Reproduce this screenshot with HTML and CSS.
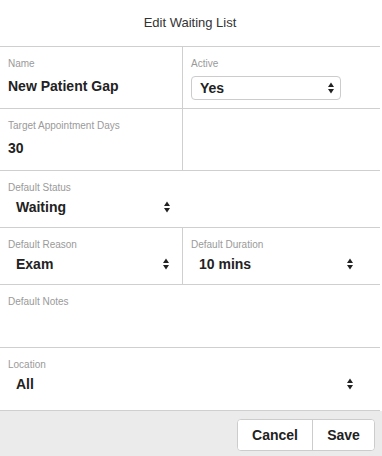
FILE: index.html
```html
<!DOCTYPE html>
<html>
<head>
<meta charset="utf-8">
<link rel="stylesheet" href="styles.css">
</head>
<body>
<div class="modal">
  <div class="header">Edit Waiting List</div>
  <div class="form">
    <div class="row">
      <div class="cell divided">
        <div class="label">Name</div>
        <div class="value">New Patient Gap</div>
      </div>
      <div class="cell">
        <div class="label">Active</div>
        <div class="select boxed">
          <span>Yes</span>
          <svg class="arrows" width="6" height="12" viewBox="0 0 6 12"><path d="M0 5 L3 0.5 L6 5 Z M0 7 L6 7 L3 11.5 Z" fill="#222"/></svg>
        </div>
      </div>
    </div>
    <div class="row">
      <div class="cell divided">
        <div class="label">Target Appointment Days</div>
        <div class="value">30</div>
      </div>
      <div class="cell"></div>
    </div>
    <div class="row short">
      <div class="cell">
        <div class="label">Default Status</div>
        <div class="select plain narrow">
          <span>Waiting</span>
          <svg class="arrows" width="6" height="12" viewBox="0 0 6 12"><path d="M0 5 L3 0.5 L6 5 Z M0 7 L6 7 L3 11.5 Z" fill="#222"/></svg>
        </div>
      </div>
      <div class="cell"></div>
    </div>
    <div class="row short">
      <div class="cell divided">
        <div class="label">Default Reason</div>
        <div class="select plain narrow">
          <span>Exam</span>
          <svg class="arrows" width="6" height="12" viewBox="0 0 6 12"><path d="M0 5 L3 0.5 L6 5 Z M0 7 L6 7 L3 11.5 Z" fill="#222"/></svg>
        </div>
      </div>
      <div class="cell">
        <div class="label">Default Duration</div>
        <div class="select plain">
          <span>10 mins</span>
          <svg class="arrows" width="6" height="12" viewBox="0 0 6 12"><path d="M0 5 L3 0.5 L6 5 Z M0 7 L6 7 L3 11.5 Z" fill="#222"/></svg>
        </div>
      </div>
    </div>
    <div class="row single tall">
      <div class="cell">
        <div class="label">Default Notes</div>
        <div class="textarea"></div>
      </div>
    </div>
    <div class="row single tall">
      <div class="cell">
        <div class="label">Location</div>
        <div class="select plain">
          <span>All</span>
          <svg class="arrows" width="6" height="12" viewBox="0 0 6 12"><path d="M0 5 L3 0.5 L6 5 Z M0 7 L6 7 L3 11.5 Z" fill="#222"/></svg>
        </div>
      </div>
    </div>
  </div>
  <div class="footer">
    <div class="btn-group">
      <button class="btn cancel">Cancel</button>
      <button class="btn save">Save</button>
    </div>
  </div>
</div>
</body>
</html>
```
FILE: styles.css
```css
* { box-sizing: border-box; }
html, body {
  margin: 0;
  padding: 0;
  background: #ffffff;
}
body {
  font-family: "Liberation Sans", Arial, sans-serif;
  color: #222;
}
.modal {
  width: 382px;
  height: 456px;
  display: flex;
  flex-direction: column;
}
.header {
  flex-shrink: 0;
  width: 380px;
  height: 47px;
  border-bottom: 1px solid #cfcfcf;
  display: flex;
  align-items: center;
  justify-content: center;
  font-size: 13px;
  color: #333;
  padding-bottom: 2px;
}
.form {
  flex-shrink: 0;
  width: 380px;
}
.row {
  display: grid;
  grid-template-columns: 183px 1fr;
  border-bottom: 1px solid #cfcfcf;
  height: 62px;
}
.row.short {
  height: 57px;
}
.row.tall {
  height: 63px;
}
.row.single {
  grid-template-columns: 1fr;
}
.cell {
  padding: 11px 8px 0 8px;
}
.cell.divided {
  border-right: 1px solid #cfcfcf;
}
.label {
  font-size: 10px;
  line-height: 12px;
  color: #9a9a9a;
}
.value {
  margin-top: 7px;
  font-size: 14px;
  line-height: 18px;
  font-weight: 700;
  color: #222;
}
.select {
  height: 24px;
  display: flex;
  align-items: center;
  justify-content: space-between;
  font-size: 14px;
  font-weight: 700;
  color: #222;
}
.select.boxed {
  margin-top: 6px;
  width: 150px;
  border: 1px solid #cccccc;
  border-radius: 4px;
  padding: 0 6px 0 8px;
  background: #fff;
}
.select.plain {
  margin-top: 1px;
  padding: 0 19px 0 8px;
}
.select.plain.narrow {
  padding-right: 5px;
}
.arrows {
  display: block;
  flex-shrink: 0;
}
.textarea {
  height: 26px;
}
.footer {
  flex: 1;
  background: #ebebeb;
  display: flex;
  justify-content: flex-end;
  align-items: flex-start;
  padding: 8px 7px 0 0;
}
.btn-group {
  display: flex;
  height: 32px;
  border: 1px solid #cccccc;
  border-radius: 4px;
  background: #fff;
  overflow: hidden;
}
.btn {
  font-family: "Liberation Sans", Arial, sans-serif;
  font-size: 14px;
  font-weight: 700;
  color: #222;
  background: #fff;
  border: none;
  margin: 0;
  padding: 0;
  height: 30px;
}
.btn.cancel {
  width: 75px;
  border-right: 1px solid #cccccc;
}
.btn.save {
  width: 61px;
}
```
